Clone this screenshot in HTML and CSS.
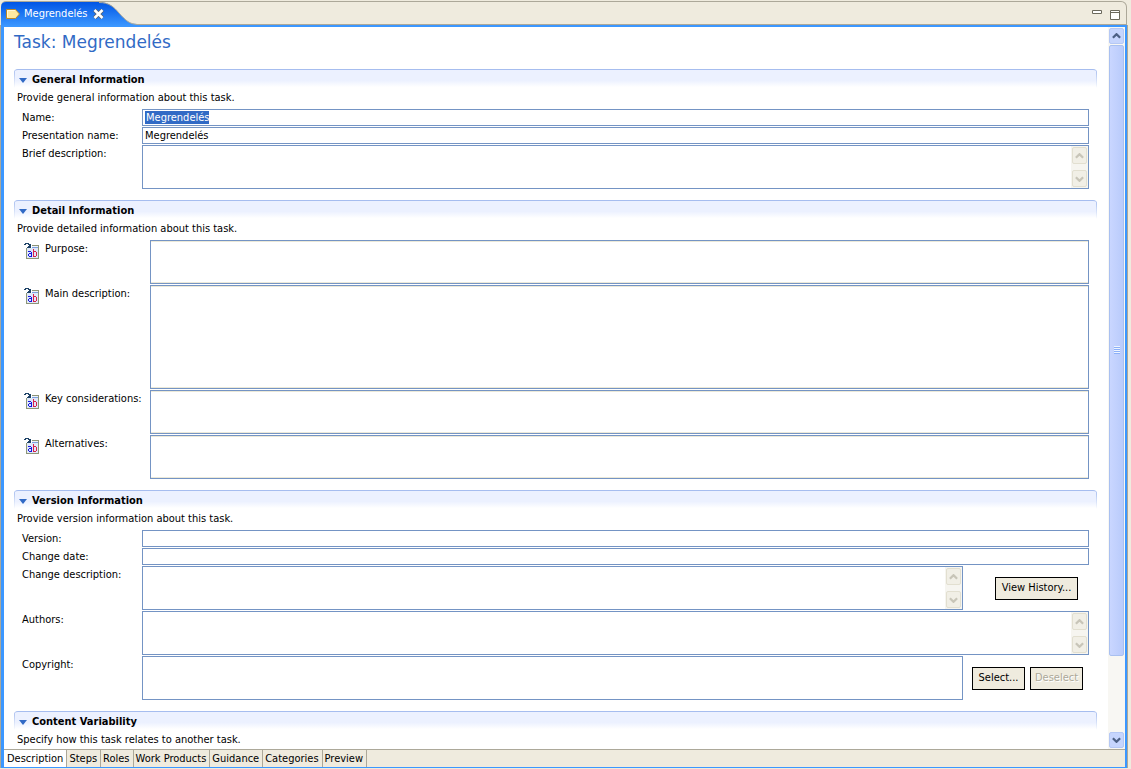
FILE: index.html
```html
<!DOCTYPE html>
<html lang="en">
<head>
<meta charset="utf-8">
<title>Task: Megrendelés</title>
<link rel="stylesheet" href="styles.css">
</head>
<body>
<svg class="defs" aria-hidden="true">
  <symbol id="rich" viewBox="0 0 16 16" shape-rendering="crispEdges">
    <path fill="#8d9578" d="M2 5h13v11H2z"/>
    <path fill="#dfe8f8" d="M3 5h11v10H3z"/>
    <path fill="#8d9578" d="M8 2h7v1H8zM14 2h1v4h-1z"/>
    <path fill="#eef3fb" d="M8 3h6v2H8z"/>
    <path fill="#7da0dc" d="M8 4h6v1H8z"/>
    <path fill="#1d4266" d="M0 1h2v1H0zM1 0h4v1H1zM4 1h2v1H4zM5 2h2v1H5zM6 1h1v4H6zM3 4h4v1H3zM4 3h2v1H4z"/>
    <path fill="#1616e0" d="M4 8h3v1H4zM7 9h1v5H7zM5 10h2v1H5zM4 11h1v2H4zM5 13h2v1H5z"/>
    <path fill="#d8204c" d="M9 6h1v8H9zM10 8h2v1h-2zM12 9h1v4h-1zM10 13h2v1h-2z"/>
  </symbol>
  <symbol id="up" viewBox="0 0 10 6"><path fill="none" stroke="currentColor" stroke-width="2.500" d="M1 5l4-4 4 4"/></symbol>
  <symbol id="down" viewBox="0 0 10 6"><path fill="none" stroke="currentColor" stroke-width="2.500" d="M1 1l4 4 4-4"/></symbol>
</svg>
<div class="window">
  <header class="titlebar">
    <svg class="tab-shape" viewBox="0 0 140 24" aria-hidden="true">
      <defs><linearGradient id="tabfill" x2="0" y2="1"><stop offset="0" stop-color="#0055e5"/><stop offset="1" stop-color="#3b97ff"/></linearGradient></defs>
      <path fill="url(#tabfill)" d="M0 24V5Q0 0 5 0H98C108 0 113 5 118 11C125 19 129 22 136 22L140 24Z"/>
      <path fill="none" stroke="#aca899" d="M98 .5C108 .5 113 5 118 11C125 19 129 22 136 22.500H140"/>
    </svg>
    <div class="tab">
      <svg width="16" height="12" viewBox="0 0 16 12" aria-hidden="true"><path fill="#ffe9a0" stroke="#b88728" d="M1.500 1.500h9l4 4.500-4 4.500h-9z"/><path fill="none" stroke="#fff8d8" d="M2.500 9V2.500H10"/></svg>
      <span class="tab-name">Megrendelés</span>
      <button class="plain" aria-label="Close"><svg width="11" height="10" viewBox="0 0 11 10"><path stroke="#56606e" stroke-width="4" d="M1.500 1l8 8M9.500 1l-8 8"/><path stroke="#fff" stroke-width="2.500" d="M1.500 1l8 8M9.500 1l-8 8"/></svg></button>
    </div>
    <div class="controls">
      <button class="plain" aria-label="Minimize"><svg width="10" height="10" viewBox="0 0 10 10"><path fill="#fff" stroke="#6b695c" d="M.5 .5h9v3h-9z"/></svg></button>
      <button class="plain" aria-label="Maximize"><svg width="10" height="10" viewBox="0 0 10 10"><path fill="#fff" stroke="#6b695c" d="M.5 .5h9v9h-9zM0 2.500h10"/></svg></button>
    </div>
  </header>
  <div class="frame">
    <div class="body">
      <main class="form">
        <h1>Task: Megrendelés</h1>
        <section>
          <h2><span class="twisty"></span>General Information</h2>
          <p>Provide general information about this task.</p>
          <div class="rows">
            <div class="row"><label for="name">Name:</label><div class="field selected"><input id="name" value="Megrendelés"><span class="highlight" aria-hidden="true">Megrendelés</span></div></div>
            <div class="row"><label for="pname">Presentation name:</label><div class="field"><input id="pname" value="Megrendelés"></div></div>
            <div class="row"><label for="brief">Brief description:</label><div class="field area"><textarea id="brief"></textarea><div class="mini"><span><svg><use href="#up"/></svg></span><span><svg><use href="#down"/></svg></span></div></div></div>
          </div>
        </section>
        <section>
          <h2><span class="twisty"></span>Detail Information</h2>
          <p>Provide detailed information about this task.</p>
          <div class="rows rich">
            <div class="row"><svg class="icon"><use href="#rich"/></svg><label for="purpose">Purpose:</label><div class="field area"><textarea id="purpose"></textarea></div></div>
            <div class="row"><svg class="icon"><use href="#rich"/></svg><label for="main">Main description:</label><div class="field area tall"><textarea id="main"></textarea></div></div>
            <div class="row"><svg class="icon"><use href="#rich"/></svg><label for="key">Key considerations:</label><div class="field area"><textarea id="key"></textarea></div></div>
            <div class="row"><svg class="icon"><use href="#rich"/></svg><label for="alt">Alternatives:</label><div class="field area"><textarea id="alt"></textarea></div></div>
          </div>
        </section>
        <section>
          <h2><span class="twisty"></span>Version Information</h2>
          <p>Provide version information about this task.</p>
          <div class="rows">
            <div class="row"><label for="version">Version:</label><div class="field"><input id="version"></div></div>
            <div class="row"><label for="date">Change date:</label><div class="field"><input id="date"></div></div>
            <div class="row"><label for="change">Change description:</label><div class="field area"><textarea id="change"></textarea><div class="mini"><span><svg><use href="#up"/></svg></span><span><svg><use href="#down"/></svg></span></div></div><div class="actions"><button class="btn wide">View History...</button></div></div>
            <div class="row"><label for="authors">Authors:</label><div class="field area"><textarea id="authors"></textarea><div class="mini"><span><svg><use href="#up"/></svg></span><span><svg><use href="#down"/></svg></span></div></div></div>
            <div class="row"><label for="copy">Copyright:</label><div class="field area"><textarea id="copy"></textarea></div><div class="actions"><button class="btn">Select...</button><button class="btn" disabled>Deselect</button></div></div>
          </div>
        </section>
        <section>
          <h2><span class="twisty"></span>Content Variability</h2>
          <p>Specify how this task relates to another task.</p>
        </section>
      </main>
      <div class="scrollbar">
        <button class="arrow" aria-label="Scroll up"><svg><use href="#up"/></svg></button>
        <div class="track"><div class="thumb"><span class="grip"></span></div></div>
        <button class="arrow" aria-label="Scroll down"><svg><use href="#down"/></svg></button>
      </div>
    </div>
    <nav class="pages">
      <button class="page active">Description</button><button class="page">Steps</button><button class="page">Roles</button><button class="page">Work Products</button><button class="page">Guidance</button><button class="page">Categories</button><button class="page">Preview</button>
    </nav>
  </div>
</div>
</body>
</html>
```
FILE: styles.css
```css
* { box-sizing: border-box; }
html, body { height: 100%; }
body {
  margin: 0;
  background: #efebde;
  color: #000;
  font: 11px/14px "DejaVu Sans Condensed", "Liberation Sans", sans-serif;
  overflow: hidden;
}
button, input, textarea { font: inherit; color: inherit; }
.defs { position: absolute; width: 0; height: 0; }
.window {
  display: flex;
  flex-direction: column;
  height: 100vh;
  margin-right: 4px;
  padding: 1px 0;
}
.titlebar {
  position: relative;
  flex: none;
  display: flex;
  justify-content: space-between;
  height: 24px;
  margin-left: 1px;
  border: solid #aca899;
  border-width: 1px 1px 1px 0;
  border-radius: 5px 6px 0 0;
}
.tab-shape { position: absolute; left: 0; top: 0; width: 140px; height: 24px; }
.tab { position: relative; display: flex; align-items: center; height: 23px; padding-left: 4px; color: #fff; }
.tab-name { margin: 0 6px 0 3px; }
.plain { display: block; padding: 0; border: 0; background: none; }
.plain svg, .mini svg, .arrow svg { display: block; }
.controls { display: flex; gap: 8px; padding: 4px 6px 0 0; }
.frame {
  flex: 1;
  min-height: 0;
  display: flex;
  flex-direction: column;
  margin-left: 1px;
  border: solid #3b97ff;
  border-width: 2px 2px 1px 3px;
  box-shadow: 1px 0 #aca899, -1px 0 #aca899;
}
.body { flex: 1; min-height: 0; display: flex; background: #fff; }
.form { flex: 1; min-width: 0; padding: 5px 11px 0 10px; overflow: hidden; }
h1 { margin: 0 0 17px; color: #316ac5; font: 17px/20px "DejaVu Sans", sans-serif; }
section { margin-bottom: 11px; }
h2 {
  display: flex;
  align-items: center;
  height: 20px;
  margin: 0;
  padding: 1px 0 0 5px;
  border-top: 1px solid #a6bdef;
  border-radius: 4px;
  background:
    linear-gradient(#a6bdef, #fff) left / 1px 100% no-repeat,
    linear-gradient(#a6bdef, #fff) right / 1px 100% no-repeat,
    linear-gradient(#ecf1ff 55%, #fff 90%);
  font-size: 11px;
  font-weight: bold;
}
.twisty { margin-right: 5px; border: solid transparent; border-width: 5px 4px 0; border-top-color: #316ac5; }
p { margin: 0 0 4px 3px; padding-top: 2px; }
.rows { display: grid; gap: 1px; margin: 0 8px; }
.row { display: flex; }
.row label { flex: none; width: 120px; padding-top: 2px; }
.field { position: relative; flex: 1; display: flex; height: 17px; border: 1px solid #7494c4; background: #fff; }
.field input, .field textarea { flex: 1; min-width: 0; margin: 0; padding: 0 2px; border: 0; outline: 0; background: none; resize: none; }
.area { height: 44px; }
.tall { height: 104px; }
.rich .field { box-shadow: inset 0 1px #ece9d8, inset 0 -1px #ece9d8; }
.highlight { position: absolute; left: 2px; top: 1px; height: 13px; line-height: 13px; padding-left: 1px; background: #316ac5; color: #fff; }
.selected input { color: transparent; }
.mini { display: flex; flex-direction: column; justify-content: space-between; width: 17px; padding: 1px; background: #f6f5f0; }
.mini span { display: grid; place-items: center; height: 17px; border: 1px solid #e2dfd0; border-radius: 2px; background: #f1efe6; color: #c8c5b8; }
.mini svg, .arrow svg { width: 9px; height: 6px; }
.icon { flex: none; width: 16px; height: 16px; margin: 3px 5px 0 2px; }
.rich .row label { width: 105px; }
.actions { display: flex; align-items: center; gap: 5px; width: 126px; padding: 0 6px 0 9px; flex: none; }
.btn { width: 53px; height: 23px; padding: 0; border: 1px solid #000; background: #efebde; white-space: nowrap; }
.btn.wide { width: 83px; margin: 0 5px 0 auto; }
.btn:disabled { color: #aca899; text-shadow: 1px 1px #fff; }
.scrollbar { flex: none; display: flex; flex-direction: column; width: 17px; padding: 1px; background: #f8f7f3; }
.arrow { display: grid; place-items: center; height: 16px; padding: 0; border: 1px solid #b5c8f4; border-radius: 2px; background: #c6d5fd; color: #4d6185; }
.track { flex: 1; padding: 1px 0; }
.thumb { display: grid; place-items: center; height: 89%; border: 1px solid #a9c0f0; border-radius: 2px; background: linear-gradient(90deg, #c9d6ff, #b9cbfb); }
.grip { width: 6px; height: 8px; background: repeating-linear-gradient(#eef4fe 0 1px, #8cb0f8 1px 2px); }
.pages { flex: none; display: flex; height: 18px; border-top: 1px solid #aca899; background: #efebde; }
.page { padding: 0 3px 0 2px; border: 0; border-right: 1px solid #aca899; background: none; }
.page.active { padding-left: 3px; background: #fff; }
```
